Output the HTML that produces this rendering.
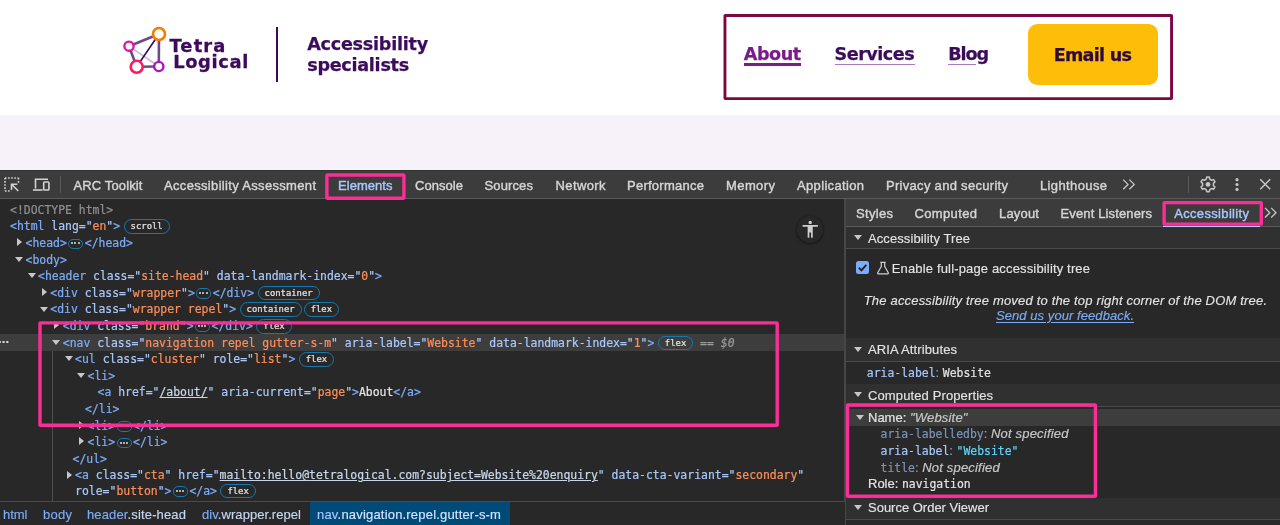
<!DOCTYPE html>
<html lang="en">
<head>
<meta charset="utf-8">
<title>TetraLogical – DevTools accessibility pane</title>
<style>
*{box-sizing:border-box;margin:0;padding:0}
html,body{width:1280px;height:525px;overflow:hidden;background:#fff}
body{position:relative;font-family:'Liberation Sans', sans-serif}
#root{position:absolute;left:0;top:0;width:1280px;height:525px;overflow:hidden;will-change:transform}
.abs{position:absolute}
.t{position:absolute;white-space:pre;display:block;-webkit-text-stroke:.15px}
/* page */
#band{left:0;top:115px;width:1280px;height:55px;background:#f7f2f9}
#divider{left:276px;top:26.5px;width:2px;height:55px;background:#3d0b5b}
#navbox{left:724px;top:14px;width:449px;height:86px;border:3px solid #7a0a52;border-radius:2px}
#btn{left:1027.900px;top:23.800px;width:129.800px;height:61.200px;border-radius:9.500px;background:#febd08}
.ul{position:absolute;height:1px;background:#a77bc0}
/* devtools */
#dt{left:0;top:170px;width:1280px;height:355px;background:#282828}
#tbar{left:0;top:170px;width:1280px;height:28px;background:#3c3c3c}
#tbarb{left:0;top:198px;width:1280px;height:1px;background:#5a5a5a}
#sbar{left:846px;top:199px;width:434px;height:27px;background:#3c3c3c}
#sbarb{left:846px;top:226px;width:434px;height:1px;background:#5a5a5a}
#vsplit{left:844.200px;top:199px;width:1.600px;height:326px;background:#474747}
.sech{position:absolute;left:846px;width:434px;background:#303030;border-bottom:1px solid #4a4a4a}
.tri{position:absolute;width:0;height:0;border-left:4px solid transparent;border-right:4px solid transparent;border-top:5.800px solid #c7c7c7}
.pink{position:absolute;border:3.400px solid #fb2d96;border-radius:2.500px}
/* rows */
.row{position:absolute;left:0;width:845px;height:16px;font:11.436px/16px 'DejaVu Sans Mono', 'Liberation Mono', monospace;white-space:pre;color:#e3e3e3;-webkit-text-stroke:.22px}
.rc{position:absolute;top:0;white-space:pre}
.tg{color:#7cacf8}.an{color:#a8c7fa}.av{color:#fe8d59}.pu{color:#a8c7fa}.dt{color:#8f8f8f}.tx{color:#e3e3e3}
.lk{text-decoration:underline;color:#c7d6ea}
.eq{color:#9a9a9a}.d0{color:#9a9a9a;font-style:italic}
.pill{display:inline-block;vertical-align:top;height:14.5px;margin:1px 0 0 3.5px;padding:0 6px;border:1.3px solid #1878ab;border-radius:8px;font-size:8.9px;line-height:12.5px;color:#e3e3e3}
.pill + .pill{margin-left:2px}
.dots{display:inline-block;vertical-align:top;width:15px;height:10.5px;margin:3.5px 1.5px 0 1.5px;border:1.3px solid #1878ab;border-radius:5px;position:relative}
.dots i{position:absolute;top:2.9px;width:2px;height:2px;border-radius:1px;background:#dcdcdc}
.dots i:nth-child(1){left:2px}.dots i:nth-child(2){left:5.2px}.dots i:nth-child(3){left:8.4px}
.ar{position:absolute;top:0;width:0;height:0}
.ar.cl{margin-top:3.200px;margin-left:3px;border-top:4px solid transparent;border-bottom:4px solid transparent;border-left:5px solid #c7c7c7}
.ar.op{margin-top:5.200px;margin-left:1px;border-left:4px solid transparent;border-right:4px solid transparent;border-top:5px solid #c7c7c7}
#sel{left:0;top:333.900px;width:844px;height:16.800px;background:#3d3d3d}
#guide{left:52.100px;top:351px;width:1px;height:150px;background:#505050}
#crumbs{left:0;top:501px;width:845px;height:24px;background:#282828;border-top:1px solid #4a4a4a}
#crsel{left:310px;top:502px;width:200px;height:23px;background:#004a77}
.cr{position:absolute;top:507.7px;font:13px/1 'Liberation Sans', sans-serif;white-space:pre;color:#7cacf8;-webkit-text-stroke:.15px}
.cr b{font-weight:400;color:#c4d7f5}
.mrow{position:absolute;font:11.436px/16px 'DejaVu Sans Mono', 'Liberation Mono', monospace;white-space:pre;color:#e3e3e3;-webkit-text-stroke:.2px}
.ak{color:#a8c7fa}.ak.dim{color:#7c93b8}.co{font:13px/16px 'Liberation Sans', sans-serif;color:#9a9a9a}.mv{color:#e3e3e3}.ms{color:#5cd5fb}
.sn{font:13px/16px 'Liberation Sans', sans-serif;color:#e3e3e3}
.si{font:italic 13px/16px 'Liberation Sans', sans-serif;color:#c7c7c7;letter-spacing:.2px}
#nsel{left:846px;top:409px;width:434px;height:16.600px;background:#3d3d3d}
</style>
</head>
<body>
<div id="root">
<!-- page header -->
<svg class="abs" style="left:118px;top:20px" width="56" height="60" viewBox="118 20 56 60">
  <g fill="none" stroke-linecap="round">
    <line x1="129" y1="46.2" x2="159" y2="34" stroke="#6c4a87" stroke-width="2.600"/>
    <line x1="129" y1="46.2" x2="136.7" y2="66.8" stroke="#6c4a87" stroke-width="2.600"/>
    <line x1="136.7" y1="66.8" x2="158.8" y2="66.5" stroke="#6c4a87" stroke-width="2.600"/>
    <line x1="159" y1="34" x2="158.8" y2="66.5" stroke="#6c4a87" stroke-width="2.600"/>
    <line x1="129" y1="46.2" x2="158.8" y2="66.5" stroke="#c9b7d6" stroke-width="1.6"/>
    <line x1="159" y1="34" x2="136.7" y2="66.8" stroke="#3d0b5b" stroke-width="1.6"/>
  </g>
  <circle cx="159" cy="34" r="6" fill="#fff" stroke="#f57c00" stroke-width="2.6"/>
  <circle cx="129" cy="46.2" r="4.6" fill="#fff" stroke="#e411a8" stroke-width="2.4"/>
  <circle cx="136.7" cy="66.8" r="6" fill="#fff" stroke="#ff1a5e" stroke-width="2.6"/>
  <circle cx="158.8" cy="66.5" r="4.6" fill="#fff" stroke="#b10fc4" stroke-width="2.4"/>
</svg>
<div class="abs" id="divider"></div>
<svg class="abs" style="left:715px;top:5px" width="470" height="105" viewBox="715 5 470 105" fill="none" stroke="#7a0845" stroke-width="2.900" stroke-linejoin="round"><rect x="724.950" y="15.450" width="446.600" height="83.200" rx="0.300"/></svg>
<div class="abs" id="btn"></div>
<div class="abs" style="left:743.8px;top:63px;width:57.5px;height:3px;background:#7b1a8a"></div>
<div class="ul" style="left:834.5px;top:64px;width:80px"></div>
<div class="ul" style="left:948.2px;top:64px;width:28px"></div>
<div class="abs" id="band"></div>

<!-- devtools chrome -->
<div class="abs" id="dt"></div>
<div class="abs" id="tbar"></div>
<div class="abs" id="tbarb"></div>
<div class="abs" style="left:0;top:170px;width:1280px;height:1px;background:#323232"></div>
<div class="abs" id="sbar"></div>
<div class="abs" id="sbarb"></div>
<div class="abs" id="vsplit"></div>
<div class="abs" style="left:60px;top:176px;width:1px;height:17px;background:#5a5a5a"></div>
<div class="abs" style="left:1188px;top:176px;width:1px;height:17px;background:#5a5a5a"></div>
<div class="abs" style="left:1163px;top:225.900px;width:97.200px;height:1.300px;background:#b0cbfb"></div>

<!-- toolbar icons -->
<svg class="abs" style="left:3px;top:175px" width="60" height="20" viewBox="3 175 60 20" fill="none" stroke="#d2d2d2" stroke-width="1.6">
  <path d="M5 178h13.5M5 178v13M5 191h5.5M18.5 178v5.5" stroke-dasharray="1.6 1.5"/>
  <path d="M11.5 184.2l6.8 6.8M11.5 190v-5.8h5.8" />
  <path d="M35.5 188.5v-9.3h12.5" />
  <path d="M33 190h9.5" stroke-width="1.6"/>
  <rect x="43.7" y="182" width="5.2" height="8" rx="0.8"/>
</svg>
<svg class="abs" style="left:1120px;top:176px" width="160" height="18" viewBox="1120 176 160 18" fill="none" stroke="#c7c7c7" stroke-width="1.3">
  <path d="M1123.2 179.6l4.8 4.8-4.8 4.8M1129.4 179.6l4.8 4.8-4.8 4.8"/>
  <g transform="translate(1208 184.4)">
    <path stroke-width="1.5" stroke-linejoin="round" d="M1.79 -5.20 L1.28 -7.29 L-1.28 -7.29 L-1.79 -5.20 L-3.61 -4.15 L-5.67 -4.76 L-6.95 -2.53 L-5.40 -1.05 L-5.40 1.05 L-6.95 2.53 L-5.67 4.76 L-3.61 4.15 L-1.79 5.20 L-1.28 7.29 L1.28 7.29 L1.79 5.20 L3.61 4.15 L5.67 4.76 L6.95 2.53 L5.40 1.05 L5.40 -1.05 L6.95 -2.53 L5.67 -4.76 L3.61 -4.15Z"/>
    <circle r="2.4" fill="#c7c7c7" stroke="none"/>
  </g>
  <g fill="#c7c7c7" stroke="none"><circle cx="1237" cy="179.7" r="1.6"/><circle cx="1237" cy="184.5" r="1.6"/><circle cx="1237" cy="189.4" r="1.6"/></g>
  <path stroke-width="1.5" d="M1260.2 179.3l10 10M1270.2 179.3l-10 10"/>
</svg>
<svg class="abs" style="left:1262px;top:204px" width="18" height="18" viewBox="1262 204 18 18" fill="none" stroke="#c7c7c7" stroke-width="1.3">
  <path d="M1265 207.900l4.800 4.800-4.800 4.800M1271.200 207.900l4.800 4.800-4.800 4.800"/>
</svg>

<!-- DOM tree -->
<div class="abs" id="sel"></div>
<div class="abs" id="guide"></div>
<span class="t" style="left:-3.600px;top:334.200px;font:700 11px/1 'DejaVu Sans Mono', 'Liberation Mono', monospace;color:#dedede;letter-spacing:-2.850px">...</span>
<div class="row" style="top:201.80px"><span class="rc" style="left:10px"><span class="dt">&lt;!DOCTYPE html&gt;</span></span></div>
<div class="row" style="top:218.40px"><span class="rc" style="left:10px"><span class="tg">&lt;html</span> <span class="an">lang</span><span class="pu">=&quot;</span><span class="av">en</span><span class="pu">&quot;</span><span class="tg">&gt;</span><span class="pill">scroll</span></span></div>
<div class="row" style="top:235.00px"><span class="ar cl" style="left:14.0px"></span><span class="rc" style="left:25.5px"><span class="tg">&lt;head&gt;</span><span class="dots"><i></i><i></i><i></i></span><span class="tg">&lt;/head&gt;</span></span></div>
<div class="row" style="top:251.60px"><span class="ar op" style="left:14.0px"></span><span class="rc" style="left:25.5px"><span class="tg">&lt;body&gt;</span></span></div>
<div class="row" style="top:268.20px"><span class="ar op" style="left:26.5px"></span><span class="rc" style="left:38px"><span class="tg">&lt;header</span> <span class="an">class</span><span class="pu">=&quot;</span><span class="av">site-head</span><span class="pu">&quot;</span> <span class="an">data-landmark-index</span><span class="pu">=&quot;</span><span class="av">0</span><span class="pu">&quot;</span><span class="tg">&gt;</span></span></div>
<div class="row" style="top:284.80px"><span class="ar cl" style="left:38.8px"></span><span class="rc" style="left:50.3px"><span class="tg">&lt;div</span> <span class="an">class</span><span class="pu">=&quot;</span><span class="av">wrapper</span><span class="pu">&quot;</span><span class="tg">&gt;</span><span class="dots"><i></i><i></i><i></i></span><span class="tg">&lt;/div&gt;</span><span class="pill">container</span></span></div>
<div class="row" style="top:301.40px"><span class="ar op" style="left:38.8px"></span><span class="rc" style="left:50.3px"><span class="tg">&lt;div</span> <span class="an">class</span><span class="pu">=&quot;</span><span class="av">wrapper repel</span><span class="pu">&quot;</span><span class="tg">&gt;</span><span class="pill">container</span><span class="pill">flex</span></span></div>
<div class="row" style="top:318.00px"><span class="ar cl" style="left:51.3px"></span><span class="rc" style="left:62.8px"><span class="tg">&lt;div</span> <span class="an">class</span><span class="pu">=&quot;</span><span class="av">brand</span><span class="pu">&quot;</span><span class="tg">&gt;</span><span class="dots"><i></i><i></i><i></i></span><span class="tg">&lt;/div&gt;</span><span class="pill">flex</span></span></div>
<div class="row" style="top:334.60px"><span class="ar op" style="left:51.3px"></span><span class="rc" style="left:62.8px"><span class="tg">&lt;nav</span> <span class="an">class</span><span class="pu">=&quot;</span><span class="av">navigation repel gutter-s-m</span><span class="pu">&quot;</span> <span class="an">aria-label</span><span class="pu">=&quot;</span><span class="av">Website</span><span class="pu">&quot;</span> <span class="an">data-landmark-index</span><span class="pu">=&quot;</span><span class="av">1</span><span class="pu">&quot;</span><span class="tg">&gt;</span><span class="pill">flex</span><span class="eq"> == </span><span class="d0">$0</span></span></div>
<div class="row" style="top:351.20px"><span class="ar op" style="left:63.6px"></span><span class="rc" style="left:75.1px"><span class="tg">&lt;ul</span> <span class="an">class</span><span class="pu">=&quot;</span><span class="av">cluster</span><span class="pu">&quot;</span> <span class="an">role</span><span class="pu">=&quot;</span><span class="av">list</span><span class="pu">&quot;</span><span class="tg">&gt;</span><span class="pill">flex</span></span></div>
<div class="row" style="top:367.80px"><span class="ar op" style="left:76.0px"></span><span class="rc" style="left:87.5px"><span class="tg">&lt;li&gt;</span></span></div>
<div class="row" style="top:384.40px"><span class="rc" style="left:97.5px"><span class="tg">&lt;a</span> <span class="an">href</span><span class="pu">=&quot;</span><span class="av lk">/about/</span><span class="pu">&quot;</span> <span class="an">aria-current</span><span class="pu">=&quot;</span><span class="av">page</span><span class="pu">&quot;</span><span class="tg">&gt;</span><span class="tx">About</span><span class="tg">&lt;/a&gt;</span></span></div>
<div class="row" style="top:401.00px"><span class="rc" style="left:85px"><span class="tg">&lt;/li&gt;</span></span></div>
<div class="row" style="top:417.60px"><span class="ar cl" style="left:76.0px"></span><span class="rc" style="left:87.5px"><span class="tg">&lt;li&gt;</span><span class="dots"><i></i><i></i><i></i></span><span class="tg">&lt;/li&gt;</span></span></div>
<div class="row" style="top:434.20px"><span class="ar cl" style="left:76.0px"></span><span class="rc" style="left:87.5px"><span class="tg">&lt;li&gt;</span><span class="dots"><i></i><i></i><i></i></span><span class="tg">&lt;/li&gt;</span></span></div>
<div class="row" style="top:450.80px"><span class="rc" style="left:72.5px"><span class="tg">&lt;/ul&gt;</span></span></div>
<div class="row" style="top:467.40px"><span class="ar cl" style="left:63.6px"></span><span class="rc" style="left:75.1px"><span class="tg">&lt;a</span> <span class="an">class</span><span class="pu">=&quot;</span><span class="av">cta</span><span class="pu">&quot;</span> <span class="an">href</span><span class="pu">=&quot;</span><span class="av lk">mailto:hello@tetralogical.com?subject=Website%20enquiry</span><span class="pu">&quot;</span> <span class="an">data-cta-variant</span><span class="pu">=&quot;</span><span class="av">secondary</span><span class="pu">&quot;</span></span></div>
<div class="row" style="top:482.50px"><span class="rc" style="left:75.1px"><span class="an">role</span><span class="pu">=&quot;</span><span class="av">button</span><span class="pu">&quot;</span><span class="tg">&gt;</span><span class="dots"><i></i><i></i><i></i></span><span class="tg">&lt;/a&gt;</span><span class="pill">flex</span></span></div>
<!-- a11y round button -->
<div class="abs" style="left:796.900px;top:216.200px;width:26.600px;height:26.600px;border-radius:50%;background:#282828;box-shadow:0 1px 3px rgba(0,0,0,.4),0 0 1.500px rgba(0,0,0,.4)"></div>
<svg class="abs" style="left:800px;top:219.100px" width="20.400" height="20.400" viewBox="0 0 24 24" fill="#cdcdcd">
  <path d="M12 2c1.100 0 2 .9 2 2s-.9 2-2 2-2-.9-2-2 .9-2 2-2zm9 7h-6v13h-2v-6h-2v6H9V9H3V7h18v2z"/>
</svg>

<!-- breadcrumbs -->
<div class="abs" id="crumbs"></div>
<div class="abs" id="crsel"></div>
<span class="cr" style="left:87px;letter-spacing:.14px">header<b>.site-head</b></span>
<span class="cr" style="left:202px;letter-spacing:.06px">div<b>.wrapper.repel</b></span>
<span class="cr" style="left:317px;letter-spacing:.19px;color:#a8c7fa">nav<b style="color:#d3e3fd">.navigation.repel.gutter-s-m</b></span>

<!-- right pane -->
<div class="sech" style="top:227px;height:22px"></div>
<div class="sech" style="top:338px;height:23.500px"></div>
<div class="sech" style="top:384px;height:22.500px"></div>
<div class="sech" style="top:498px;height:21.500px"></div>
<div class="tri" style="left:854.300px;top:235.200px"></div>
<div class="tri" style="left:854.300px;top:346.800px"></div>
<div class="tri" style="left:854.300px;top:392.300px"></div>
<div class="tri" style="left:854.300px;top:505px"></div>
<div class="abs" id="nsel"></div>
<div class="tri" style="left:856px;top:415px;border-left-width:4px;border-right-width:4px;border-top-width:5px"></div>
<!-- checkbox + flask -->
<div class="abs" style="left:856px;top:261px;width:13px;height:13px;border-radius:2.500px;background:#7cacf8"></div>
<svg class="abs" style="left:856px;top:261px" width="13" height="13" viewBox="0 0 13 13" fill="none" stroke="#1f1f1f" stroke-width="1.900"><path d="M2.800 6.700l2.600 2.600 4.900-5.400"/></svg>
<svg class="abs" style="left:876px;top:261px" width="14" height="14" viewBox="0 0 14 14" fill="none" stroke="#d0d0d0" stroke-width="1.200" stroke-linejoin="round"><path d="M4.300 1.300h5.400M5.300 1.300v4.200l-3.600 6.300c-.3.600 0 1 .6 1h9.400c.6 0 .9-.4.600-1l-3.600-6.300v-4.200"/></svg>
<div class="mrow" style="left:866.75px;top:364.50px"><span class="ak">aria-label</span><span class="co">: </span><span class="mv">Website</span></div>
<div class="mrow" style="left:868px;top:409.50px"><span class="sn">Name: </span><span class="si">"Website"</span></div>
<div class="mrow" style="left:880.5px;top:426.20px"><span class="ak dim">aria-labelledby</span><span class="co">: </span><span class="si">Not specified</span></div>
<div class="mrow" style="left:880.5px;top:443.00px"><span class="ak">aria-label</span><span class="co">: </span><span class="ms">"Website"</span></div>
<div class="mrow" style="left:880.5px;top:459.50px"><span class="ak dim">title</span><span class="co">: </span><span class="si">Not specified</span></div>
<div class="mrow" style="left:868px;top:476.20px"><span class="sn">Role: </span><span class="mv">navigation</span></div>
<span class="t" style="left:169.40px;top:36.95px;font:normal 700 17.9px/1 'DejaVu Sans', 'Liberation Sans', sans-serif;letter-spacing:1.145px;color:#3d0b5b;-webkit-text-stroke:.3px;">Tetra</span>
<span class="t" style="left:173.20px;top:53.05px;font:normal 700 17.9px/1 'DejaVu Sans', 'Liberation Sans', sans-serif;letter-spacing:0.608px;color:#3d0b5b;-webkit-text-stroke:.3px;">Logical</span>
<span class="t" style="left:307.20px;top:35.90px;font:normal 700 17.6px/1 'DejaVu Sans', 'Liberation Sans', sans-serif;letter-spacing:-0.246px;color:#3d0b5b;-webkit-text-stroke:.25px;">Accessibility</span>
<span class="t" style="left:307.20px;top:56.90px;font:normal 700 17.6px/1 'DejaVu Sans', 'Liberation Sans', sans-serif;letter-spacing:-0.275px;color:#3d0b5b;-webkit-text-stroke:.25px;">specialists</span>
<span class="t" style="left:743.80px;top:46.10px;font:normal 700 17.6px/1 'DejaVu Sans', 'Liberation Sans', sans-serif;letter-spacing:-0.459px;color:#7b1a8a;-webkit-text-stroke:.25px;">About</span>
<span class="t" style="left:834.50px;top:46.10px;font:normal 700 17.6px/1 'DejaVu Sans', 'Liberation Sans', sans-serif;letter-spacing:-0.489px;color:#3d0b5b;-webkit-text-stroke:.25px;">Services</span>
<span class="t" style="left:948.20px;top:46.10px;font:normal 700 17.6px/1 'DejaVu Sans', 'Liberation Sans', sans-serif;letter-spacing:-1.042px;color:#3d0b5b;-webkit-text-stroke:.25px;">Blog</span>
<span class="t" style="left:1053.70px;top:46.50px;font:normal 700 17.6px/1 'DejaVu Sans', 'Liberation Sans', sans-serif;letter-spacing:-0.732px;color:#2c0a3f;-webkit-text-stroke:.25px;">Email us</span>
<span class="t" style="left:73.50px;top:179.40px;font:normal 400 13px/1 'Liberation Sans', sans-serif;letter-spacing:0.131px;color:#d5d5d5;-webkit-text-stroke:.4px;">ARC Toolkit</span>
<span class="t" style="left:164.00px;top:179.40px;font:normal 400 13px/1 'Liberation Sans', sans-serif;letter-spacing:0.326px;color:#d5d5d5;-webkit-text-stroke:.4px;">Accessibility Assessment</span>
<span class="t" style="left:338.00px;top:179.40px;font:normal 400 13px/1 'Liberation Sans', sans-serif;letter-spacing:0.042px;color:#a8c7fa;-webkit-text-stroke:.4px;">Elements</span>
<span class="t" style="left:415.00px;top:179.40px;font:normal 400 13px/1 'Liberation Sans', sans-serif;letter-spacing:0.049px;color:#d5d5d5;-webkit-text-stroke:.4px;">Console</span>
<span class="t" style="left:484.50px;top:179.40px;font:normal 400 13px/1 'Liberation Sans', sans-serif;letter-spacing:0.133px;color:#d5d5d5;-webkit-text-stroke:.4px;">Sources</span>
<span class="t" style="left:555.50px;top:179.40px;font:normal 400 13px/1 'Liberation Sans', sans-serif;letter-spacing:0.385px;color:#d5d5d5;-webkit-text-stroke:.4px;">Network</span>
<span class="t" style="left:627.00px;top:179.40px;font:normal 400 13px/1 'Liberation Sans', sans-serif;letter-spacing:0.258px;color:#d5d5d5;-webkit-text-stroke:.4px;">Performance</span>
<span class="t" style="left:726.00px;top:179.40px;font:normal 400 13px/1 'Liberation Sans', sans-serif;letter-spacing:0.409px;color:#d5d5d5;-webkit-text-stroke:.4px;">Memory</span>
<span class="t" style="left:797.00px;top:179.40px;font:normal 400 13px/1 'Liberation Sans', sans-serif;letter-spacing:0.339px;color:#d5d5d5;-webkit-text-stroke:.4px;">Application</span>
<span class="t" style="left:886.00px;top:179.40px;font:normal 400 13px/1 'Liberation Sans', sans-serif;letter-spacing:0.299px;color:#d5d5d5;-webkit-text-stroke:.4px;">Privacy and security</span>
<span class="t" style="left:1040.00px;top:179.40px;font:normal 400 13px/1 'Liberation Sans', sans-serif;letter-spacing:0.375px;color:#d5d5d5;-webkit-text-stroke:.4px;">Lighthouse</span>
<span class="t" style="left:856.00px;top:207.40px;font:normal 400 13px/1 'Liberation Sans', sans-serif;letter-spacing:0.319px;color:#d5d5d5;-webkit-text-stroke:.4px;">Styles</span>
<span class="t" style="left:914.50px;top:207.40px;font:normal 400 13px/1 'Liberation Sans', sans-serif;letter-spacing:0.359px;color:#d5d5d5;-webkit-text-stroke:.4px;">Computed</span>
<span class="t" style="left:999.00px;top:207.40px;font:normal 400 13px/1 'Liberation Sans', sans-serif;letter-spacing:0.191px;color:#d5d5d5;-webkit-text-stroke:.4px;">Layout</span>
<span class="t" style="left:1060.50px;top:207.40px;font:normal 400 13px/1 'Liberation Sans', sans-serif;letter-spacing:0.135px;color:#d5d5d5;-webkit-text-stroke:.4px;">Event Listeners</span>
<span class="t" style="left:1174.20px;top:207.40px;font:normal 400 13px/1 'Liberation Sans', sans-serif;letter-spacing:0.334px;color:#a8c7fa;-webkit-text-stroke:.4px;">Accessibility</span>
<span class="t" style="left:868.00px;top:231.50px;font:normal 400 13px/1 'Liberation Sans', sans-serif;letter-spacing:0.093px;color:#e3e3e3;">Accessibility Tree</span>
<span class="t" style="left:891.75px;top:262.00px;font:normal 400 13px/1 'Liberation Sans', sans-serif;letter-spacing:0.156px;color:#e3e3e3;">Enable full-page accessibility tree</span>
<span class="t" style="left:863.75px;top:294.00px;font:italic 400 13px/1 'Liberation Sans', sans-serif;letter-spacing:0.182px;color:#e3e3e3;">The accessibility tree moved to the top right corner of the DOM tree.</span>
<span class="t" style="left:996.00px;top:308.50px;font:italic 400 13px/1 'Liberation Sans', sans-serif;letter-spacing:0.067px;color:#7cacf8;text-decoration:underline;text-underline-offset:2px;">Send us your feedback.</span>
<span class="t" style="left:868.00px;top:342.75px;font:normal 400 13px/1 'Liberation Sans', sans-serif;letter-spacing:0.112px;color:#e3e3e3;">ARIA Attributes</span>
<span class="t" style="left:868.00px;top:388.50px;font:normal 400 13px/1 'Liberation Sans', sans-serif;letter-spacing:0.120px;color:#e3e3e3;">Computed Properties</span>
<span class="t" style="left:868.00px;top:500.75px;font:normal 400 13px/1 'Liberation Sans', sans-serif;letter-spacing:-0.009px;color:#e3e3e3;">Source Order Viewer</span>
<span class="t" style="left:3.00px;top:507.75px;font:normal 400 13px/1 'Liberation Sans', sans-serif;letter-spacing:-0.021px;color:#7cacf8;">html</span>
<span class="t" style="left:43.00px;top:507.75px;font:normal 400 13px/1 'Liberation Sans', sans-serif;letter-spacing:0.266px;color:#7cacf8;">body</span>

<!-- annotation boxes -->
<svg class="abs" style="left:0;top:0" width="1280" height="525" viewBox="0 0 1280 525" fill="none" stroke="#fb2d96" stroke-width="3.4" stroke-linejoin="round">
<rect x="326.90" y="175.00" width="77.00" height="23.20" rx="0.4"/>
<rect x="40.00" y="322.90" width="737.20" height="102.40" rx="0.4"/>
<rect x="1164.10" y="202.60" width="97.20" height="21.50" rx="0.4"/>
<rect x="847.50" y="405.00" width="247.90" height="91.30" rx="0.4"/>
</svg>
</div>
</body>
</html>
